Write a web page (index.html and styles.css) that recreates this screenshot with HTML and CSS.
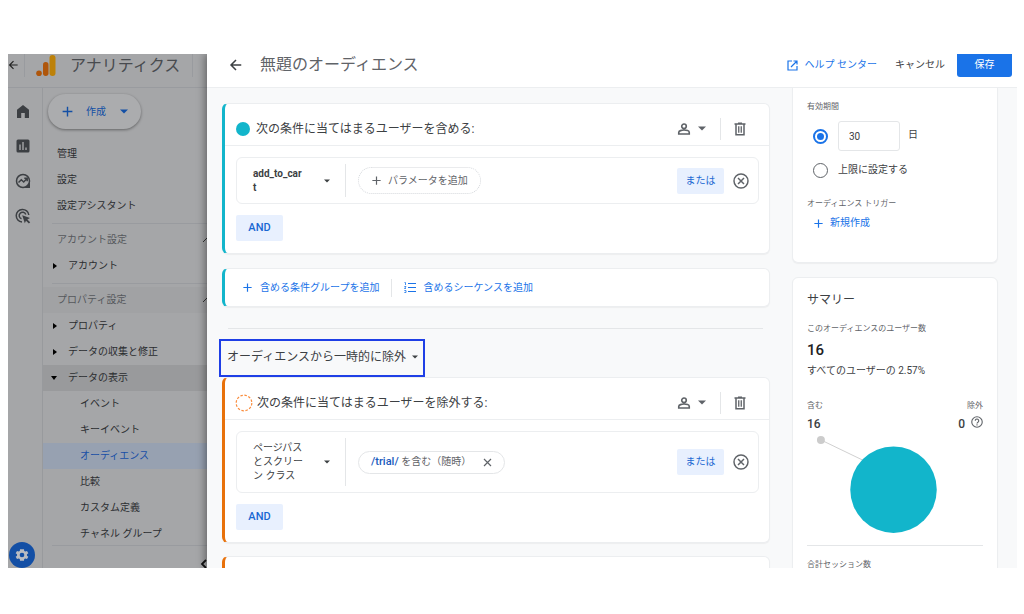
FILE: index.html
```html
<!DOCTYPE html>
<html lang="ja">
<head>
<meta charset="utf-8">
<title>アナリティクス - 無題のオーディエンス</title>
<link rel="stylesheet" href="styles.css">
</head>
<body>
<svg class="defs" width="0" height="0" aria-hidden="true">
  <symbol id="back" viewBox="0 0 24 24"><path d="M21 12H4M12 3.500L3.500 12l8.500 8.500" fill="none" stroke="currentColor" stroke-width="2.600"/></symbol>
  <symbol id="plus" viewBox="0 0 24 24"><path d="M12 3v18M3 12h18" fill="none" stroke="currentColor" stroke-width="2.600"/></symbol>
  <symbol id="down" viewBox="0 0 10 6"><path d="M0 .5h10L5 5.500z" fill="currentColor"/></symbol>
  <symbol id="person" viewBox="0 0 24 24"><path d="M12 3.500a3.900 3.900 0 1 0 0 7.800 3.900 3.900 0 0 0 0-7.800zM3 20.500v-2.700c0-2.700 5-4 9-4s9 1.300 9 4v2.700z" fill="none" stroke="currentColor" stroke-width="2.800"/></symbol>
  <symbol id="trash" viewBox="0 0 24 28"><path d="M1 4h22M8 2.500h8M4 4v21.500h16V4" fill="none" stroke="currentColor" stroke-width="3"/><path d="M9.500 8.500v13M14.500 8.500v13" stroke="currentColor" stroke-width="2.600"/></symbol>
  <symbol id="remove" viewBox="0 0 24 24"><circle cx="12" cy="12" r="10.500" fill="none" stroke="currentColor" stroke-width="2.200"/><path d="M7.500 7.500l9 9M16.500 7.500l-9 9" stroke="currentColor" stroke-width="2.200"/></symbol>
</svg>
<div class="app">
  <aside class="under">
    <header class="brand">
      <a href="#" class="brand-back" aria-label="戻る"><svg width="11" height="12"><use href="#back"/></svg></a>
      <svg class="logo" width="20" height="23" viewBox="0 0 20 23"><rect x="13.500" y="1" width="6" height="21" rx="3" fill="#bd8109"/><rect x="7" y="8" width="5.500" height="14" rx="2.700" fill="#af560b"/><circle cx="3" cy="19.200" r="2.800" fill="#af560b"/></svg>
      <span class="brand-name">アナリティクス</span>
    </header>
    <div class="under-body">
      <nav class="rail" aria-label="メイン">
        <a href="#" aria-label="ホーム"><svg width="14" height="15" viewBox="0 0 14 15"><path d="M1 5.800L7 1l6 4.800V14H8.800V9H5.200v5H1z" fill="currentColor"/></svg></a>
        <a href="#" aria-label="レポート"><svg width="14" height="14" viewBox="0 0 14 14"><rect x=".5" y=".5" width="13" height="13" rx="1.500" fill="currentColor"/><path d="M4 5.500V11M7 3v8M10 8.500V11" stroke="#a5a6a8" stroke-width="1.400"/></svg></a>
        <a href="#" aria-label="探索"><svg width="16" height="16" viewBox="0 0 16 16" fill="none" stroke="currentColor" stroke-width="1.500"><circle cx="8" cy="8" r="6.500"/><path d="M3.500 9.500l2.800-2.700 2.400 2.200 3.300-3.400M9.300 5.300h2.900v2.900"/><path d="M15 9.500V15H9.500z" fill="currentColor" stroke="none"/></svg></a>
        <a href="#" aria-label="広告"><svg width="16" height="16" viewBox="0 0 16 16" fill="none" stroke="currentColor" stroke-width="1.500"><path d="M7 14A6.300 6.300 0 1 1 13.800 7"/><path d="M6.500 10.800A3.400 3.400 0 1 1 10.800 6.500"/><path d="M7.200 7.200l7.800 2.900-2.700 1.300 2.900 2.900-1.300 1.300-2.900-2.900-1.200 2.500z" fill="currentColor" stroke="none"/></svg></a>
        <a href="#" class="gear" aria-label="管理"><svg width="16" height="16" viewBox="0 0 24 24"><path fill="#b9bcc2" fill-rule="evenodd" d="M19.400 13a7.500 7.500 0 0 0 0-2l2.100-1.600-2-3.500-2.500 1a7.500 7.500 0 0 0-1.700-1L15 3.200H9L8.700 5.900a7.500 7.500 0 0 0-1.700 1l-2.500-1-2 3.500L4.600 11a7.500 7.500 0 0 0 0 2l-2.100 1.600 2 3.500 2.500-1a7.500 7.500 0 0 0 1.700 1l.3 2.700h6l.3-2.700a7.500 7.500 0 0 0 1.700-1l2.500 1 2-3.500zM12 15.500a3.500 3.500 0 1 1 0-7 3.500 3.500 0 0 1 0 7z"/></svg></a>
      </nav>
      <nav class="menu" aria-label="管理メニュー">
        <button class="create"><svg width="13" height="13"><use href="#plus"/></svg><span>作成</span><svg width="8" height="5"><use href="#down"/></svg></button>
        <a href="#">管理</a>
        <a href="#">設定</a>
        <a href="#">設定アシスタント</a>
        <hr>
        <button class="group">アカウント設定<svg width="8" height="6" viewBox="0 0 5 6"><path d="M1 5l4-4 4 4" fill="none" stroke="#333"/></svg></button>
        <a href="#" class="tree"><svg width="4" height="6" viewBox="0 0 4 6"><path d="M0 0l4 3-4 3z"/></svg>アカウント</a>
        <hr>
        <button class="group shade">プロパティ設定<svg width="8" height="6" viewBox="0 0 5 6"><path d="M1 5l4-4 4 4" fill="none" stroke="#333"/></svg></button>
        <a href="#" class="tree"><svg width="4" height="6" viewBox="0 0 4 6"><path d="M0 0l4 3-4 3z"/></svg>プロパティ</a>
        <a href="#" class="tree"><svg width="4" height="6" viewBox="0 0 4 6"><path d="M0 0l4 3-4 3z"/></svg>データの収集と修正</a>
        <a href="#" class="tree open"><svg width="6" height="4" viewBox="0 0 6 4"><path d="M0 0h6L3 4z"/></svg>データの表示</a>
        <a href="#" class="leaf">イベント</a>
        <a href="#" class="leaf">キーイベント</a>
        <a href="#" class="leaf current">オーディエンス</a>
        <a href="#" class="leaf">比較</a>
        <a href="#" class="leaf">カスタム定義</a>
        <a href="#" class="leaf">チャネル グループ</a>
        <div class="fold"><button aria-label="閉じる"><svg width="7" height="10" viewBox="0 0 7 10"><path d="M6 1L2 5l4 4" fill="none" stroke="#111" stroke-width="1.800"/></svg></button></div>
      </nav>
    </div>
  </aside>

  <main class="panel">
    <header class="bar">
      <button class="plain" aria-label="戻る"><svg width="14" height="14"><use href="#back"/></svg></button>
      <h1>無題のオーディエンス</h1>
      <a href="#" class="help"><svg width="11" height="11" viewBox="0 0 22 22" fill="none" stroke="currentColor" stroke-width="2.400"><path d="M10 2H2v18h18v-8M13 2h7v7M20 2L8 14"/></svg>ヘルプ センター</a>
      <button class="plain cancel">キャンセル</button>
      <button class="save">保存</button>
    </header>
    <div class="content">
      <div class="builder">
        <section class="card include">
          <div class="card-head">
            <span class="dot"></span><h2>次の条件に当てはまるユーザーを含める:</h2>
            <button class="plain scope" aria-label="スコープ"><svg width="14" height="14"><use href="#person"/></svg><svg width="8" height="5"><use href="#down"/></svg></button>
            <button class="plain trash" aria-label="削除"><svg width="12" height="14"><use href="#trash"/></svg></button>
          </div>
          <div class="card-body">
            <div class="rule">
              <button class="plain event"><b>add_to_cart</b><svg width="6" height="4"><use href="#down"/></svg></button>
              <button class="chip dotted"><svg width="11" height="11"><use href="#plus"/></svg>パラメータを追加</button>
              <button class="tonal or">または</button>
              <button class="plain" aria-label="条件を削除"><svg width="16" height="16"><use href="#remove"/></svg></button>
            </div>
            <button class="tonal and">AND</button>
          </div>
        </section>
        <section class="card include add">
          <button class="plain link"><svg width="11" height="11"><use href="#plus"/></svg>含める条件グループを追加</button>
          <button class="plain link"><svg width="12" height="11" viewBox="0 0 12 11" stroke="currentColor" fill="none"><path d="M4 1.500h8M4 5.500h8M4 9.500h8" stroke-width="1.200"/><path d="M.5 .5h1v2.500M.3 4.500h1.700L.5 6.500H2M.3 8.500h1.700v2H.3" stroke-width=".8"/></svg>含めるシーケンスを追加</button>
        </section>
        <hr class="split">
        <div class="mode">
          <select aria-label="除外の種類"><option>オーディエンスから一時的に除外</option><option>オーディエンスから完全に除外</option></select>
          <svg width="6" height="4"><use href="#down"/></svg>
        </div>
        <section class="card exclude">
          <div class="card-head">
            <svg class="ring" width="18" height="18" viewBox="0 0 18 18"><circle cx="9" cy="9" r="7.800" fill="none" stroke="#fa8c3c" stroke-width="1.200" stroke-dasharray="2.500 1.600"/></svg><h2>次の条件に当てはまるユーザーを除外する:</h2>
            <button class="plain scope" aria-label="スコープ"><svg width="14" height="14"><use href="#person"/></svg><svg width="8" height="5"><use href="#down"/></svg></button>
            <button class="plain trash" aria-label="削除"><svg width="12" height="14"><use href="#trash"/></svg></button>
          </div>
          <div class="card-body">
            <div class="rule">
              <button class="plain event"><span>ページパスとスクリーン クラス</span><svg width="6" height="4"><use href="#down"/></svg></button>
              <button class="chip"><span><b>/trial/</b> を含む（随時）</span><svg width="9" height="9" viewBox="0 0 9 9"><path d="M1 1l7 7M8 1L1 8" stroke="currentColor" stroke-width="1.200"/></svg></button>
              <button class="tonal or">または</button>
              <button class="plain" aria-label="条件を削除"><svg width="16" height="16"><use href="#remove"/></svg></button>
            </div>
            <button class="tonal and">AND</button>
          </div>
        </section>
        <section class="card exclude next"></section>
      </div>

      <aside class="side">
        <section class="tile period">
          <h3>有効期間</h3>
          <div class="choice">
            <input type="radio" name="period" id="days" checked aria-label="日数を指定">
            <input type="text" id="count" value="30" aria-label="日数"><label for="count" class="unit">日</label>
          </div>
          <div class="choice second">
            <input type="radio" name="period" id="max"><label for="max">上限に設定する</label>
          </div>
          <h3>オーディエンス トリガー</h3>
          <button class="plain new"><svg width="11" height="11"><use href="#plus"/></svg>新規作成</button>
        </section>
        <section class="tile summary">
          <h2>サマリー</h2>
          <h3>このオーディエンスのユーザー数</h3>
          <p class="total">16</p>
          <p class="share">すべてのユーザーの 2.57%</p>
          <div class="pair"><h3>含む</h3><h3>除外</h3></div>
          <div class="pair nums"><span>16</span><span>0<svg width="12" height="12" viewBox="0 0 24 24" fill="none" stroke="#5f6368" stroke-width="2.200"><circle cx="12" cy="12" r="10.500"/><path d="M8.500 9.500a3.500 3.500 0 1 1 5.600 2.800c-1.300 1-2.100 1.500-2.100 2.900M12 16.700v2.400"/></svg></span></div>
          <svg class="chart" viewBox="0 0 177 106" role="img" aria-label="含むユーザー 16"><path d="M14 8l56 27" stroke="#d0d0d0"/><circle cx="14" cy="8" r="4" fill="#ccc"/><circle cx="87" cy="58" r="43.500" fill="#12b5cb"/></svg>
          <h3 class="sessions">合計セッション数</h3>
        </section>
      </aside>
    </div>
  </main>
</div>
</body>
</html>
```

FILE: styles.css
```css
* { box-sizing: border-box; }
body {
  margin: 0;
  height: 100vh;
  padding: 54px 7px 46px 8px;
  overflow: hidden;
  background: #fff;
  color: #3c4043;
  font: 10px/14px Roboto, "Noto Sans CJK JP", sans-serif;
}
.defs { position: absolute; }
h1, h2, h3, p { margin: 0; font-weight: 400; }
hr { border: 0; margin: 0; }
a { color: inherit; text-decoration: none; }
svg { flex: none; display: block; }
button, input, select { font: inherit; color: inherit; }
button { display: flex; align-items: center; border: 0; padding: 0; cursor: pointer; }
.plain { background: none; }
.app { display: flex; height: 100%; overflow: hidden; }

/* Dimmed application under the panel */
.under { flex: 0 0 199px; display: flex; flex-direction: column; background: #a5a6a8; color: #2b2d30; overflow: hidden; }
.brand { flex: none; height: 34px; display: flex; align-items: center; padding-bottom: 11px; border-bottom: 1px solid #999b9f; }
.brand-back { width: 17px; height: 23px; display: flex; align-items: center; border-right: 1px solid #999b9f; color: #222; }
.logo { margin-left: 11px; }
.brand-name { margin-left: 14px; padding-right: 12px; border-right: 1px solid #999b9f; font-size: 16px; line-height: 23px; color: #484b4f; white-space: nowrap; }
.under-body { flex: 1; min-height: 0; display: flex; }
.rail { flex: 0 0 35px; display: flex; flex-direction: column; align-items: center; gap: 19px; padding: 15px 7px 0 0; border-right: 1px solid #989a9d; color: #3c3f43; }
.rail a { height: 16px; display: flex; align-items: center; padding-left: 2px; }
.rail .gear { flex: none; width: 26px; height: 26px; padding: 0; margin: auto 0 0; justify-content: center; border-radius: 50%; background: #134fa5; }
.menu { flex: 1; min-width: 0; display: flex; flex-direction: column; }
.menu > a { flex: none; display: flex; align-items: center; height: 26px; padding-left: 14px; }
.create { flex: none; align-self: flex-start; gap: 12px; height: 35px; margin: 6px 0 12px 5px; padding: 0 13px; border-radius: 18px; background: #abacae; color: #134fa5; box-shadow: 0 1px 3px rgba(0, 0, 0, .4); }
.create svg:last-child { margin-left: 2px; }
.menu hr { flex: none; height: 4px; margin: 4px 0 0 9px; border-top: 1px solid #999b9f; }
.menu .group { flex: none; height: 26px; justify-content: space-between; padding-left: 14px; background: none; color: #55585c; }
.group svg { width: 5px; }
.menu .shade { background: #a1a2a4; }
.menu .tree { gap: 11px; padding-left: 10px; }
.menu .open { gap: 11px; padding-left: 8px; background: #999a9c; }
.menu .leaf { padding-left: 37px; }
.menu .current { background: #97a1b1; color: #174ea6; }
.fold { flex: 1; margin: -2px 0 0 9px; border-top: 1px solid #999b9f; display: flex; justify-content: flex-end; align-items: flex-start; padding-top: 13px; }
.fold button { background: none; }

/* Panel */
.panel { position: relative; flex: 1; min-width: 0; display: flex; flex-direction: column; background: #f8f9fa; box-shadow: -2px 0 8px rgba(0, 0, 0, .4); }
.bar { flex: none; height: 34px; display: flex; align-items: center; padding: 0 5px 11px 22px; background: #fff; border-bottom: 1px solid #eceef0; }
.bar h1 { flex: 1; margin-left: 17px; font-size: 16px; line-height: 22px; color: #5f6368; }
.help { display: flex; align-items: center; gap: 7px; color: #1a73e8; }
.cancel { margin: 0 12px 0 18px; }
.save { justify-content: center; width: 55px; height: 23px; border-radius: 0 0 3px 3px; background: #1a73e8; color: #fff; }
.content { flex: 1; min-height: 0; display: flex; gap: 22px; padding: 0 19px 0 15px; overflow: hidden; }
.builder { flex: 1; min-width: 0; padding-top: 15px; }
.card { border: 1px solid #eceef0; border-left: 3px solid #12b5cb; border-radius: 6px; background: #fff; box-shadow: 0 1px 1px rgba(60, 64, 67, .06); }
.exclude { border-left-color: #e8710a; }
.card-head { display: flex; align-items: center; height: 42px; padding: 8px 23px 0 11px; border-bottom: 1px solid #eceef0; }
.card-head h2 { flex: 1; margin-left: 6px; font-size: 12px; line-height: 18px; }
.dot { width: 14px; height: 14px; border-radius: 50%; background: #12b5cb; }
.scope { gap: 7px; padding-right: 14px; color: #5f6368; }
.trash { height: 22px; padding-left: 13px; border-left: 1px solid #e4e6e8; color: #5f6368; }
.card-body { padding: 11px 10px 12px 11px; }
.rule { display: flex; align-items: stretch; min-height: 47px; padding: 6px 9px 6px 16px; border: 1px solid #eceef0; border-radius: 6px; margin-bottom: 11px; color: #5f6368; }
.rule > * { align-self: center; }
.rule .event { align-self: stretch; width: 93px; padding-right: 15px; margin-right: 12px; border-right: 1px solid #e4e6e8; text-align: left; justify-content: space-between; color: #3c4043; }
.event > :first-child { width: 52px; word-break: break-all; }
.chip { height: 27px; gap: 6px; padding: 0 12px; border: 1px solid #e4e6e8; border-radius: 14px; background: #fff; color: #5f6368; }
.chip.dotted { border-style: dotted; border-color: #d5d8dc; }
.exclude .chip { height: 23px; gap: 12px; }
.chip b { color: #185abc; font-weight: 500; font-size: 11px; }
.tonal { justify-content: center; width: 47px; height: 26px; border-radius: 2px; background: #e8f0fe; color: #1967d2; }
.and { font-size: 11px; font-weight: 500; }
.or { margin: 0 9px 0 auto; }
.add { display: flex; align-items: center; height: 39px; margin-top: 14px; padding-left: 17px; }
.link { height: 18px; gap: 7px; padding-right: 12px; color: #1a73e8; }
.link + .link { padding-left: 12px; border-left: 1px solid #e4e6e8; }
.split { margin: 21px 7px 10px 6px; border-top: 1px solid #e4e6e8; }
.mode { display: flex; align-items: center; width: 206px; height: 38px; margin-left: -3px; padding: 0 5px 3px 6px; border: 2px solid #1f3fe6; }
.mode select { flex: 1; min-width: 0; appearance: none; border: 0; padding: 0; background: none; font-size: 12px; line-height: 18px; }
.ring + h2 { margin-left: 4px; }
.exclude .rule { min-height: 62px; }
.exclude .card-head { padding-left: 10px; }
.next { height: 40px; margin-top: 13px; }

/* Settings and summary */
.side { flex: 0 0 206px; }
.tile { padding: 0 14px; border: 1px solid #eceef0; border-radius: 6px; background: #fff; box-shadow: 0 1px 1px rgba(60, 64, 67, .06); }
.tile h3 { font-size: 8px; line-height: 12px; color: #5f6368; }
.period { height: 175px; padding-top: 13px; border-top: 0; border-radius: 0 0 6px 6px; }
.choice { display: flex; align-items: center; height: 30px; margin-top: 8px; padding-left: 6px; }
.choice.second { height: 16px; margin: 11px 0 20px; }
input[type="radio"] { appearance: none; flex: none; display: grid; place-items: center; width: 15px; height: 15px; margin: 0 10px 0 0; border: 1px solid #5f6368; border-radius: 50%; }
input[type="radio"]:checked { border: 2px solid #1a73e8; }
input[type="radio"]:checked::before { content: ""; width: 7px; height: 7px; border-radius: 50%; background: #1a73e8; }
input[type="text"] { width: 62px; height: 30px; padding: 0 10px; border: 1px solid #e4e6e8; border-radius: 3px; background: #fff; }
.unit { margin: 0 0 2px 8px; }
.new { gap: 6px; margin: 6px 0 0 6px; color: #1a73e8; }
.summary { height: 330px; margin-top: 14px; padding-top: 13px; }
.summary h2 { font-size: 12px; line-height: 18px; margin-bottom: 14px; }
.total { margin-top: 5px; font: 500 15px/20px Roboto, sans-serif; color: #202124; }
.share { margin-top: 4px; }
.pair { display: flex; justify-content: space-between; align-items: center; margin-top: 22px; }
.nums { margin-top: 4px; font-size: 12px; line-height: 16px; font-weight: 500; }
.nums span { display: flex; gap: 6px; }
.chart { width: 100%; }
.sessions { margin-top: 8px; padding-top: 13px; border-top: 1px solid #e4e6e8; }
```
